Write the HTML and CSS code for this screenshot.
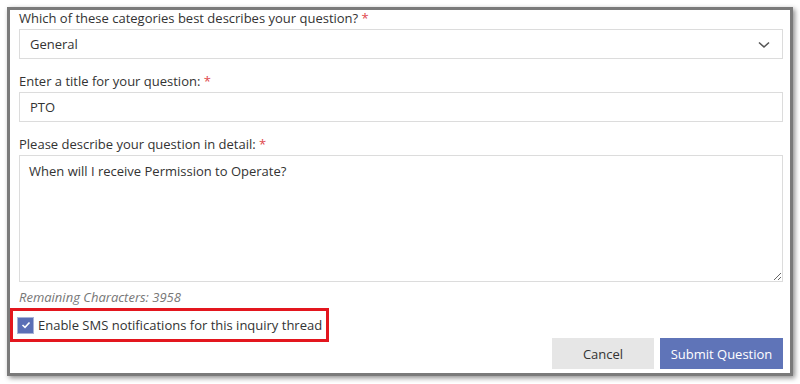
FILE: index.html
```html
<!DOCTYPE html>
<html lang="en">
  <head>
    <meta charset="UTF-8" />
    <meta name="viewport" content="width=device-width, initial-scale=1.0" />
    <title>Ask a Question</title>
    <link rel="stylesheet" href="styles.css">
  </head>
  <body>
    <div class="container">
      <form class="askQuestion">
        <div class="fields">
          <label for="category">Which of these categories best describes your question? <span class="req">*</span></label>
          <div class="selectWrap">
            <select id="category" class="category" name="category">
              <option value="General">General</option>
              <option value="Billing">Billing</option>
              <option value="Installation">Installation</option>
            </select>
            <svg class="chevron" width="12" height="8" viewBox="0 0 12 8">
              <path d="M1 1.5 L6 6 L11 1.5" fill="none" stroke="#555" stroke-width="1.6" />
            </svg>
          </div>
        </div>
        <div class="fields">
          <label for="title">Enter a title for your question: <span class="req">*</span></label>
          <input type="text" id="title" class="title" name="title" value="PTO" />
        </div>
        <div class="fields">
          <label for="detail">Please describe your question in detail: <span class="req">*</span></label>
          <textarea id="detail" class="detail" name="detail">When will I receive Permission to Operate?</textarea>
        </div>
        <div class="remaining">Remaining Characters: 3958</div>
        <label class="sms">
          <span class="checkbox">
            <svg width="10" height="8" viewBox="0 0 10 8">
              <path d="M1.5 4 L4 6.3 L8.5 1.5" fill="none" stroke="#fff" stroke-width="1.6" />
            </svg>
          </span>
          Enable SMS notifications for this inquiry thread
        </label>
        <div class="actions">
          <button type="button" class="cancel">Cancel</button>
          <button type="submit" class="submit">Submit Question</button>
        </div>
      </form>
    </div>
  </body>
</html>
```
FILE: styles.css
```css
body {
  margin: 0;
  padding: 7px;
  font-family: "Open Sans", sans-serif;
  font-size: 13px;
  color: #333;
  background-color: #fff;
}

.container {
  width: 786px;
  height: 369px;
  box-sizing: border-box;
  border: 3px solid #7a7a7a;
  box-shadow: 2px 2px 5px rgba(0, 0, 0, 0.45);
  background-color: #fff;
  padding: 0 7px 0 9px;
}

.fields {
  margin-bottom: 14px;
}

label {
  display: block;
  line-height: 17px;
  margin-bottom: 2px;
  color: #333;
}

.req {
  color: #e0474c;
}

.selectWrap {
  position: relative;
}

.chevron {
  position: absolute;
  right: 13px;
  top: 12px;
  pointer-events: none;
}

select,
input[type="text"],
textarea {
  display: block;
  width: 100%;
  box-sizing: border-box;
  border: 1px solid #dcdcdc;
  border-radius: 0;
  background-color: #fff;
  font-family: "Open Sans", sans-serif;
  font-size: 13px;
  color: #333;
  padding: 0 10px;
  height: 30px;
  outline: none;
}

select {
  appearance: none;
  -webkit-appearance: none;
}

textarea {
  height: 127px;
  padding: 6px 9px;
  line-height: 18px;
  resize: vertical;
}

.remaining {
  margin-top: -8px;
  line-height: 18px;
  font-size: 13px;
  font-style: italic;
  color: #777;
}

.sms {
  display: inline-flex;
  align-items: center;
  gap: 4px;
  margin: 9px 0 0 -2px;
  line-height: 20px;
  outline: 3px solid #e3161e;
  outline-offset: 4px;
}

.checkbox {
  display: inline-flex;
  align-items: center;
  justify-content: center;
  width: 17px;
  height: 17px;
  background-color: #5b6fb6;
  border: 1px solid #a9b3d8;
  box-sizing: border-box;
}

.actions {
  display: flex;
  justify-content: flex-end;
  gap: 6px;
  margin-top: 3px;
}

button {
  border: none;
  height: 31px;
  font-family: "Open Sans", sans-serif;
  font-size: 13px;
  cursor: pointer;
}

.cancel {
  width: 102px;
  background-color: #e6e6e6;
  color: #333;
}

.submit {
  width: 123px;
  background-color: #5f74b8;
  color: #fff;
}
```
